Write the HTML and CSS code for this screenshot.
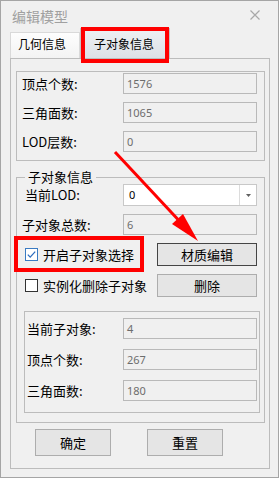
FILE: index.html
```html
<!DOCTYPE html>
<html lang="zh-CN">
<head>
	<meta charset="UTF-8">
	<title>编辑模型</title>
	<link rel="stylesheet" href="styles.css">
</head>
<body>
<div class="window">
	<div class="titlebar">
		<span class="title">编辑模型</span>
		<svg class="close" width="10" height="10" viewBox="0 0 10 10"><path d="M0.5 0.5L9.5 9.5M9.5 0.5L0.5 9.5" stroke="#a8a8a8" stroke-width="1.2" fill="none"/></svg>
	</div>
	<div class="tabstrip">
		<div class="tab">几何信息</div>
		<div class="tab tab-active">子对象信息</div>
	</div>
	<div class="tabpage">
		<div class="group group-geo">
			<div class="row"><span class="lbl">顶点个数:</span><span class="field">1576</span></div>
			<div class="row"><span class="lbl">三角面数:</span><span class="field">1065</span></div>
			<div class="row row-lod"><span class="lbl">LOD层数:</span><span class="field">0</span></div>
		</div>
		<fieldset class="group-sub">
			<legend>子对象信息</legend>
			<div class="row row-combo">
				<span class="lbl">当前LOD:</span>
				<div class="combo">
					<span class="combo-val">0</span>
					<span class="combo-btn"><svg width="5" height="3" viewBox="0 0 5 3"><path d="M0 0H5L2.5 3Z" fill="#606060"/></svg></span>
				</div>
			</div>
			<div class="row"><span class="lbl">子对象总数:</span><span class="field">6</span></div>
			<div class="row row-btn">
				<label class="chk"><svg width="13" height="13" viewBox="0 0 13 13"><rect x="0.5" y="0.5" width="12" height="12" fill="#fff" stroke="#3a7bc2"/><path d="M2.8 6.6L5.2 9.1L10.2 3.6" stroke="#2b6cbf" stroke-width="1.3" fill="none"/></svg>开启子对象选择</label>
				<button class="btn btn-focus">材质编辑</button>
			</div>
			<div class="row row-btn row-del">
				<label class="chk"><svg width="13" height="13" viewBox="0 0 13 13"><rect x="0.5" y="0.5" width="12" height="12" fill="#fff" stroke="#333"/></svg>实例化删除子对象</label>
				<button class="btn">删除</button>
			</div>
			<div class="subbox">
				<div class="row"><span class="lbl">当前子对象:</span><span class="field">4</span></div>
				<div class="row"><span class="lbl">顶点个数:</span><span class="field">267</span></div>
				<div class="row row-last"><span class="lbl">三角面数:</span><span class="field">180</span></div>
			</div>
		</fieldset>
		<div class="actions">
			<button class="btn btn-lg">确定</button>
			<button class="btn btn-lg">重置</button>
		</div>
	</div>

	<!-- annotations -->
	<div class="mark mark-tab"></div>
	<div class="mark mark-chk"></div>
	<svg class="arrow" width="279" height="478" viewBox="0 0 279 478">
		<path d="M115 152L178 219.5" stroke="#ff0000" stroke-width="3" fill="none"/>
		<path d="M198 241L172 224L183 214Z" fill="#ff0000"/>
	</svg>
</div>
</body>
</html>
```

FILE: styles.css
```css
html,body{margin:0;padding:0;}
body{font:13px/16px "Noto Sans CJK SC","Noto Sans",sans-serif;color:#000;background:#f0f0f0;}
.window{position:relative;width:279px;height:478px;box-sizing:border-box;border:1px solid #a5a5a5;background:#f0f0f0;overflow:hidden;}

.titlebar{display:flex;justify-content:space-between;align-items:flex-start;height:27px;box-sizing:border-box;padding:7px 18px 0 11px;}
.title{font-size:14px;color:#a0a0a0;}
.close{margin-top:2px;}

.tabstrip{display:flex;align-items:flex-end;height:30px;margin-left:9px;font-size:12px;}
.tab{width:70px;height:26px;box-sizing:border-box;border:1px solid #d9d9d9;border-bottom:0;padding:3px 0 0 7px;background:linear-gradient(#fdfdfd,#f3f3f3);}
.tab-active{width:90px;height:30px;padding:7px 0 0 13px;border-color:#c5c5c5;background:linear-gradient(#eef0f3,#dde1e6);}

.tabpage{margin-left:9px;width:260px;height:411px;box-sizing:border-box;border:1px solid #bcbcbc;padding-top:12px;}

.row{display:flex;align-items:center;justify-content:space-between;height:21px;padding:0 7px 0 5px;}
.field{width:134px;height:21px;box-sizing:border-box;border:1px solid #b9b9b9;background:#f0f0f0;color:#6d6d6d;font:11px/19px "Noto Sans",sans-serif;padding-left:3px;}

.group-geo{margin-left:5px;width:249px;height:90px;box-sizing:border-box;border:1px solid #bcbcbc;padding-top:1px;}
.group-geo .row+.row{margin-top:8px;}
.group-geo .row-lod{margin-top:9px;}

.group-sub{margin:9px 0 0 5px;width:249px;box-sizing:border-box;border:1px solid #bcbcbc;padding:0 0 9px 0;min-inline-size:0;}
.group-sub legend{margin-left:8px;padding:0 3px;line-height:14px;}
.group-sub>.row+.row{margin-top:8px;}
.group-sub>.row-del{margin-top:7px;}
.row-combo{height:22px;}
.row-combo .lbl{padding-left:3px;}

.combo{display:flex;width:134px;height:22px;box-sizing:border-box;border:1px solid #c8c8c8;background:#fff;}
.combo-val{flex:1;padding-left:5px;font:11px/20px "Noto Sans",sans-serif;}
.combo-btn{width:16px;display:flex;align-items:center;justify-content:center;border-left:1px solid #dcdcdc;}

.row-btn{height:23px;padding-left:8px;}
.chk{display:flex;align-items:center;gap:5px;}
.chk svg{display:block;}

.btn{font:inherit;color:#000;background:#e5e5e5;border:1px solid #adadad;padding:0;margin:0;width:100px;height:23px;box-sizing:border-box;}
.btn-focus{border-color:#454545;}
.btn-lg{width:76px;height:27px;}

.subbox{margin:14px 4px 0 7px;border:1px solid #bcbcbc;padding:6px 2px 11px 2px;}
.subbox .row{padding:0;}
.subbox .row+.row{margin-top:10px;}
.subbox .row-last{margin-top:11px;}

.actions{display:flex;gap:36px;margin-top:6px;padding-left:24px;}

.mark{position:absolute;box-sizing:border-box;border:4px solid #ff0000;}
.mark-tab{left:80px;top:26px;width:88px;height:36px;}
.mark-chk{left:13px;top:235px;width:130px;height:36px;}
.arrow{position:absolute;left:-1px;top:-1px;pointer-events:none;}
```
